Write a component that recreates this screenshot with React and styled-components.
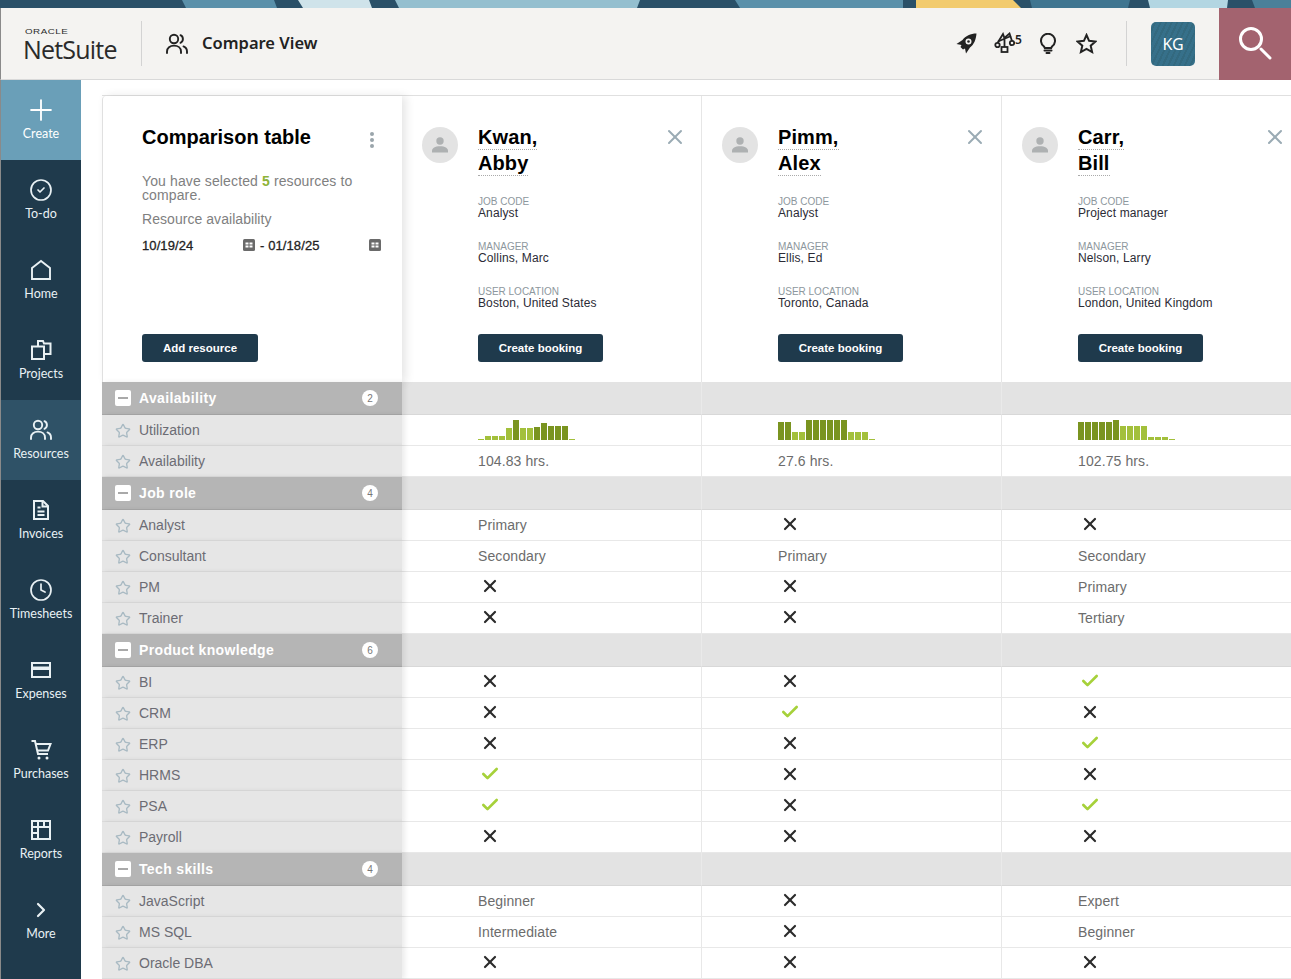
import styled, { createGlobalStyle } from 'styled-components';
import { Plus, CircleCheck, Clock, ChevronRight, X, Check, Star } from 'lucide-react';

const Global = createGlobalStyle`
  html, body { margin: 0; padding: 0; height: 100%; overflow: hidden; }
  body { font-family: "Liberation Sans", Arial, sans-serif; background: #fff; }
  * { box-sizing: border-box; }
`;

const NAV = [
  { label: 'Create', icon: <Plus size={34} strokeWidth={1.3} />, tone: 'create' },
  { label: 'To-do', icon: <CircleCheck size={24} strokeWidth={1.7} /> },
  { label: 'Home', icon: <HomeIcon /> },
  { label: 'Projects', icon: <ProjectsIcon /> },
  { label: 'Resources', icon: <PeopleIcon size={24} />, tone: 'active' },
  { label: 'Invoices', icon: <InvoiceIcon /> },
  { label: 'Timesheets', icon: <Clock size={24} strokeWidth={1.7} /> },
  { label: 'Expenses', icon: <CardIcon /> },
  { label: 'Purchases', icon: <CartIcon /> },
  { label: 'Reports', icon: <ReportIcon /> },
  { label: 'More', icon: <ChevronRight size={24} strokeWidth={2.2} /> },
];

const PEOPLE = [
  {
    last: 'Kwan,', first: 'Abby', job: 'Analyst', manager: 'Collins, Marc', location: 'Boston, United States',
    darkAt: 13,
    bars: [1, 4, 4, 4, 12, 20, 12, 12, 13, 17, 14, 14, 14, 1],
  },
  {
    last: 'Pimm,', first: 'Alex', job: 'Analyst', manager: 'Ellis, Ed', location: 'Toronto, Canada',
    darkAt: 13,
    bars: [18, 18, 8, 8, 20, 20, 20, 20, 20, 20, 8, 8, 8, 1],
  },
  {
    last: 'Carr,', first: 'Bill', job: 'Project manager', manager: 'Nelson, Larry', location: 'London, United Kingdom',
    darkAt: 18,
    bars: [18, 18, 18, 18, 18, 20, 14, 14, 14, 14, 3, 3, 3, 1],
  },
];

const SECTIONS = [
  {
    title: 'Availability', count: 2,
    rows: [
      { label: 'Utilization', cells: ['chart', 'chart', 'chart'] },
      { label: 'Availability', cells: ['104.83 hrs.', '27.6 hrs.', '102.75 hrs.'] },
    ],
  },
  {
    title: 'Job role', count: 4,
    rows: [
      { label: 'Analyst', cells: ['Primary', 'x', 'x'] },
      { label: 'Consultant', cells: ['Secondary', 'Primary', 'Secondary'] },
      { label: 'PM', cells: ['x', 'x', 'Primary'] },
      { label: 'Trainer', cells: ['x', 'x', 'Tertiary'] },
    ],
  },
  {
    title: 'Product knowledge', count: 6,
    rows: [
      { label: 'BI', cells: ['x', 'x', 'y'] },
      { label: 'CRM', cells: ['x', 'y', 'x'] },
      { label: 'ERP', cells: ['x', 'x', 'y'] },
      { label: 'HRMS', cells: ['y', 'x', 'x'] },
      { label: 'PSA', cells: ['y', 'x', 'y'] },
      { label: 'Payroll', cells: ['x', 'x', 'x'] },
    ],
  },
  {
    title: 'Tech skills', count: 4,
    rows: [
      { label: 'JavaScript', cells: ['Beginner', 'x', 'Expert'] },
      { label: 'MS SQL', cells: ['Intermediate', 'x', 'Beginner'] },
      { label: 'Oracle DBA', cells: ['x', 'x', 'x'] },
    ],
  },
];

function HomeIcon() {
  return (
    <svg width="22" height="22" viewBox="0 0 22 22" fill="none" stroke="currentColor" strokeWidth="1.9">
      <path d="M2 9 11 2l9 7v11H2z" />
    </svg>
  );
}

function ProjectsIcon() {
  return (
    <svg width="22" height="22" viewBox="0 0 22 22" fill="none" stroke="currentColor" strokeWidth="2">
      <path d="M2 7.5h12V20H2z" />
      <path d="M8 7.5V2h5l1 2.5h6.5V15H14" />
    </svg>
  );
}

function PeopleIcon({ size = 24 }) {
  return (
    <svg width={size} height={size} viewBox="0 0 24 24" fill="none" stroke="currentColor" strokeWidth="1.9" strokeLinecap="round">
      <circle cx="9" cy="7" r="4.2" />
      <path d="M2 21v-1.5C2 16 5 13.6 9 13.6s7 2.4 7 5.9V21" />
      <path d="M15.5 3.2a4.2 4.2 0 0 1 0 7.6M18.5 14.4c2.2.9 3.5 2.8 3.5 5V21" />
    </svg>
  );
}

function InvoiceIcon() {
  return (
    <svg width="22" height="22" viewBox="0 0 22 22" fill="none" stroke="currentColor" strokeWidth="2">
      <path d="M4 2h9l5 5v13H4z" />
      <path d="M12.5 2v5.5H18M7.5 12.5h7M7.500 16h7M7.5 8.5h3" />
    </svg>
  );
}

function CardIcon() {
  return (
    <svg width="22" height="22" viewBox="0 0 22 22">
      <path fill="currentColor" fillRule="evenodd" d="M1 3h20v16H1zm2 2v2.5h16V5zm0 6v6h16v-6z" />
    </svg>
  );
}

function CartIcon() {
  return (
    <svg width="22" height="22" viewBox="0 0 22 22" fill="none" stroke="currentColor" strokeWidth="2">
      <path d="M1.5 2H5l3 13h10" />
      <path d="M6 5h14.5l-2.5 6.5H7.5" />
      <circle cx="9" cy="19" r="1.5" fill="currentColor" stroke="none" />
      <circle cx="17" cy="19" r="1.5" fill="currentColor" stroke="none" />
    </svg>
  );
}

function ReportIcon() {
  return (
    <svg width="22" height="22" viewBox="0 0 22 22" fill="none" stroke="currentColor" strokeWidth="2">
      <path d="M2 2h18v18H2zM2 8h18M8 2v18M14 2v6M2 14h6" />
    </svg>
  );
}

function RocketIcon() {
  return (
    <svg width="21" height="21" viewBox="0 0 21 21">
      <path fill="#222" fillRule="evenodd" d="M20.5.5C14.5.5 9.500 3 6.500 7L.5 11l5 1-1 2 2.500 2.500 2-1 1 5 4-6c4-3 6-8 6.500-14zM12.500 5.500a3 3 0 1 0 0 6 3 3 0 0 0 0-6z" />
      <circle cx="12.5" cy="8.5" r="1.3" fill="#222" />
    </svg>
  );
}

function ScaleIcon() {
  return (
    <svg width="21" height="21" viewBox="0 0 21 21" fill="none" stroke="#222" strokeWidth="1.8">
      <circle cx="3.5" cy="13" r="2.2" />
      <circle cx="18" cy="11" r="2.2" />
      <path d="M3.5 11 9 2l1.5 4 5-4.500L18 9" />
      <path d="M4 9.500 17 4M10.500 5v10" />
      <rect x="7.5" y="15" width="6" height="5" />
    </svg>
  );
}

function BulbIcon() {
  return (
    <svg width="16" height="21" viewBox="0 0 16 21" fill="none" stroke="#222" strokeWidth="2" strokeLinecap="round">
      <path d="M4 13.5a7 7 0 1 1 8 0l-.8 1.5H4.8z" />
      <path d="M4.5 17.5h7M6.500 20h3" />
    </svg>
  );
}

function OutlineStar() {
  return (
    <svg width="21" height="21" viewBox="0 0 21 21" fill="none" stroke="#222" strokeWidth="2">
      <path d="M10.5 2l2.600 5.800 6.400.7-4.800 4.200 1.400 6.300-5.600-3.200-5.600 3.200 1.400-6.300L1.500 8.500l6.400-.7z" />
    </svg>
  );
}

function SearchIcon() {
  return (
    <svg width="40" height="40" viewBox="0 0 40 40" fill="none" stroke="#fff">
      <circle cx="16" cy="15" r="10.5" strokeWidth="3" />
      <path d="M26 25l9 9" strokeWidth="3" strokeLinecap="round" />
    </svg>
  );
}

function DateIcon() {
  return (
    <svg width="12" height="12" viewBox="0 0 12 12">
      <rect width="12" height="12" rx="1.5" fill="#6a6a6a" />
      <path fill="#fff" d="M2.500 3.500h3v2h-3zm4 0h3v2h-3zm-4 3h3v2h-3zm4 0h3v2h-3z" />
    </svg>
  );
}

function PersonIcon() {
  return (
    <svg width="18" height="18" viewBox="0 0 18 18" fill="#aeb1b2">
      <circle cx="9" cy="5" r="3.7" />
      <path d="M1 16.5v-1.8C1 12 4 10.200 9 10.200s8 1.800 8 4.500v1.800z" />
    </svg>
  );
}

function Bars({ person }) {
  return (
    <BarRow>
      {person.bars.map((h, i) => (
        <Bar key={i} $dark={h >= person.darkAt} style={{ height: h }} />
      ))}
    </BarRow>
  );
}

function Cell({ value }) {
  if (value === 'x') return <Mark><X size={20} strokeWidth={2.6} color="#2b2b2b" /></Mark>;
  if (value === 'y') return <Mark><Check size={20} strokeWidth={3.2} color="#a6d13a" /></Mark>;
  return <CellText>{value}</CellText>;
}

function PersonCard({ person }) {
  return (
    <Card>
      <Avatar><PersonIcon /></Avatar>
      <CardBody>
        <Name>
          <NameLine>{person.last}</NameLine>
          <NameLine>{person.first}</NameLine>
        </Name>
        <Field $first>
          <FieldLabel>JOB CODE</FieldLabel>
          <FieldValue>{person.job}</FieldValue>
        </Field>
        <Field>
          <FieldLabel>MANAGER</FieldLabel>
          <FieldValue>{person.manager}</FieldValue>
        </Field>
        <Field>
          <FieldLabel>USER LOCATION</FieldLabel>
          <FieldValue>{person.location}</FieldValue>
        </Field>
        <PrimaryButton $wide>Create booking</PrimaryButton>
      </CardBody>
      <Close><X size={24} strokeWidth={2} /></Close>
    </Card>
  );
}

export default function App() {
  return (
    <Page>
      <Global />
      <Banner>
        <svg width="1291" height="8" viewBox="0 0 1291 8">
          <rect width="1291" height="8" fill="#2a5068" />
          <path d="M182 0h92l3 8h-91z" fill="#5a90aa" />
          <path d="M298 0h71l3 8h-69z" fill="#cfe3ea" />
          <path d="M395 0h245l-3 8H399z" fill="#94bfcf" />
          <path d="M735 0h168v8H740z" fill="#5a90aa" />
          <path d="M916 0h97l8 8h-105z" fill="#f2cb6e" />
          <path d="M1030 0h100l-2 8h-96z" fill="#3f7590" />
          <path d="M1148 0h80l-1 8h-77z" fill="#b3d6e2" />
          <path d="M1252 0h39v8h-36z" fill="#4a8099" />
        </svg>
      </Banner>
      <Header>
        <LogoWrap>
          <LogoOracle>ORACLE</LogoOracle>
          <LogoName>NetSuite</LogoName>
        </LogoWrap>
        <HeaderDivider />
        <HeaderTitle>
          <PeopleIcon size={24} />
          <span>Compare View</span>
        </HeaderTitle>
        <HeaderIcons>
          <RocketIcon />
          <ScaleWrap><ScaleIcon /><ScaleCount>5</ScaleCount></ScaleWrap>
          <BulbIcon />
          <StarSlot><OutlineStar /></StarSlot>
        </HeaderIcons>
        <HeaderDivider $right />
        <UserTile>KG</UserTile>
        <SearchTile><SearchIcon /></SearchTile>
      </Header>
      <Body>
        <Sidebar>
          {NAV.map((n) => (
            <NavItem key={n.label} $tone={n.tone}>
              <NavIcon>{n.icon}</NavIcon>
              <span>{n.label}</span>
            </NavItem>
          ))}
        </Sidebar>
        <Main>
          <Table>
            <TopRow>
              <LeftHead>
                <TitleRow>
                  <PanelTitle>Comparison table</PanelTitle>
                  <Kebab><i /><i /><i /></Kebab>
                </TitleRow>
                <Selected>You have selected <b>5</b> resources to compare.</Selected>
                <SubLabel>Resource availability</SubLabel>
                <DateRow>
                  <DateText>10/19/24</DateText>
                  <DateIcon />
                  <DateText $sep>- 01/18/25</DateText>
                  <DateIcon />
                </DateRow>
                <PrimaryButton>Add resource</PrimaryButton>
              </LeftHead>
              {PEOPLE.map((p) => <PersonCard key={p.last} person={p} />)}
            </TopRow>
            {SECTIONS.map((s) => (
              <section key={s.title}>
                <GroupRow>
                  <GroupLabel>
                    <Toggle><i /></Toggle>
                    <GroupTitle>{s.title}</GroupTitle>
                    <Count>{s.count}</Count>
                  </GroupLabel>
                  <GroupCell /><GroupCell /><GroupCell />
                </GroupRow>
                {s.rows.map((r) => (
                  <Row key={r.label}>
                    <RowLabel>
                      <RowStar><Star size={16} strokeWidth={2} color="#a9bac3" /></RowStar>
                      <span>{r.label}</span>
                    </RowLabel>
                    {r.cells.map((c, i) => (
                      <RowCell key={i}>
                        {c === 'chart' ? <Bars person={PEOPLE[i]} /> : <Cell value={c} />}
                      </RowCell>
                    ))}
                  </Row>
                ))}
              </section>
            ))}
          </Table>
        </Main>
      </Body>
    </Page>
  );
}

const Page = styled.div`
  width: 1291px;
  height: 979px;
  overflow: hidden;
  display: flex;
  flex-direction: column;
`;

const Banner = styled.div`
  height: 8px;
  line-height: 0;
  flex: none;
`;

const Header = styled.header`
  height: 72px;
  flex: none;
  display: flex;
  align-items: center;
  background: #f4f3f1;
  border-bottom: 1px solid #d9d9d9;
  border-left: 1px solid #8a8a8a;
  padding-left: 23px;
`;

const LogoWrap = styled.div`
  width: 94px;
  color: #2a2a2a;
  font-family: "Open Sans", sans-serif;
  margin-top: 3px;
`;

const LogoOracle = styled.div`
  font-family: "Liberation Sans", sans-serif;
  font-size: 7.5px;
  line-height: 8px;
  letter-spacing: 0.4px;
  margin-left: 1px;
  transform: scaleX(1.3);
  transform-origin: left;
`;

const LogoName = styled.div`
  font-size: 25px;
  line-height: 26px;
  letter-spacing: -0.8px;
  margin-left: -1px;
`;

const HeaderDivider = styled.div`
  width: 1px;
  height: 45px;
  background: #d3d3d3;
  margin-left: ${({ $right }) => ($right ? '29px' : '23px')};
`;

const HeaderTitle = styled.div`
  display: flex;
  align-items: center;
  gap: 13px;
  margin: -2px 0 0 23px;
  color: #222;
  font-family: "Noto Sans", sans-serif;
  font-weight: 600;
  font-size: 16.5px;
  flex: 1;
  svg { margin-top: 2px; }
`;

const HeaderIcons = styled.div`
  display: flex;
  align-items: center;
  gap: 17px;
`;

const ScaleWrap = styled.div`
  display: flex;
  align-items: flex-start;
  width: 30px;
  height: 24px;
  margin-right: -1px;
`;

const ScaleCount = styled.span`
  color: #222;
  font-family: "Noto Sans", sans-serif;
  font-weight: 600;
  font-size: 12px;
  line-height: 10px;
  margin-top: 3px;
`;

const StarSlot = styled.span`
  display: flex;
  margin-left: 3px;
`;

const UserTile = styled.div`
  width: 44px;
  height: 44px;
  margin-left: 24px;
  border-radius: 5px;
  background: repeating-linear-gradient(115deg, #36708a 0 3px, #33697f 3px 5px);
  color: #fff;
  display: flex;
  align-items: center;
  justify-content: center;
  font-family: "Noto Sans", sans-serif;
  font-size: 16px;
`;

const SearchTile = styled.div`
  width: 72px;
  height: 72px;
  margin-left: 24px;
  background: #a3636f;
  display: flex;
  align-items: center;
  justify-content: center;
`;

const Body = styled.div`
  flex: 1;
  display: flex;
  min-height: 0;
`;

const Sidebar = styled.nav`
  width: 81px;
  flex: none;
  background: #1f3a4c;
  border-left: 1px solid #8a8a8a;
`;

const NavItem = styled.div`
  height: 80px;
  padding-top: 18px;
  display: flex;
  flex-direction: column;
  align-items: center;
  gap: 5px;
  color: ${({ $tone }) => ($tone === 'create' ? '#fff' : '#e9f1f4')};
  background: ${({ $tone }) => ($tone === 'create' ? '#6a9fb8' : $tone === 'active' ? '#2f5267' : 'transparent')};
  font-family: Lato, sans-serif;
  font-size: 12.5px;
  line-height: 14px;
`;

const NavIcon = styled.div`
  height: 24px;
  display: flex;
  align-items: center;
  justify-content: center;
  svg { display: block; flex: none; }
`;

const Main = styled.main`
  flex: 1;
  padding: 15px 0 0 21px;
  min-width: 0;
`;

const Table = styled.div`
  border-top: 1px solid #e0e0e0;
`;

const TopRow = styled.div`
  display: grid;
  grid-template-columns: repeat(4, 300px);
  height: 286px;
`;

const LeftHead = styled.div`
  position: relative;
  z-index: 1;
  background: #fff;
  border-left: 1px solid #e0e0e0;
  border-radius: 4px 0 0 0;
  box-shadow: 4px 0 10px rgba(0, 0, 0, 0.1);
  padding: 29px 20px 0 39px;
`;

const TitleRow = styled.div`
  display: flex;
  justify-content: space-between;
  align-items: center;
`;

const PanelTitle = styled.h2`
  margin: 0;
  font-size: 20px;
  line-height: 24px;
  font-weight: 700;
  color: #000;
`;

const Kebab = styled.div`
  display: flex;
  flex-direction: column;
  gap: 2px;
  padding: 6px 8px 0 0;
  i { width: 4px; height: 4px; border-radius: 50%; background: #9aa5ab; display: block; }
`;

const Selected = styled.p`
  margin: 25px 0 0;
  font-size: 14px;
  line-height: 14px;
  letter-spacing: 0.12px;
  color: #80807f;
  b { color: #8fb339; }
`;

const SubLabel = styled.div`
  margin-top: 9px;
  font-size: 14px;
  line-height: 16px;
  letter-spacing: 0.05px;
  color: #80807f;
`;

const DateRow = styled.div`
  display: flex;
  align-items: center;
  margin-top: 10px;
  height: 16px;
`;

const DateText = styled.span`
  font-size: 13px;
  letter-spacing: 0.1px;
  -webkit-text-stroke: 0.3px #222;
  color: #222;
  width: ${({ $sep }) => ($sep ? '114px' : '101px')};
  padding-left: ${({ $sep }) => ($sep ? '5px' : '0')};
`;

const PrimaryButton = styled.button`
  display: block;
  height: 28px;
  width: ${({ $wide }) => ($wide ? '125px' : '116px')};
  border: 0;
  border-radius: 3px;
  background: #1f3a4c;
  color: #fff;
  font-family: "Liberation Sans", sans-serif;
  font-size: 11.5px;
  font-weight: 700;
  margin-top: ${({ $wide }) => ($wide ? '25px' : '81px')};
  padding: 0;
`;

const Card = styled.div`
  position: relative;
  display: flex;
  background: #fff;
  border-right: 1px solid #e6e6e6;
  padding: 31px 0 0 20px;
`;

const Avatar = styled.div`
  width: 36px;
  height: 36px;
  border-radius: 50%;
  background: #e3e3e3;
  flex: none;
  display: flex;
  align-items: center;
  justify-content: center;
`;

const CardBody = styled.div`
  margin-left: 20px;
  margin-top: -1px;
`;

const Name = styled.div`
  display: flex;
  flex-direction: column;
  align-items: flex-start;
  gap: 2px;
`;

const NameLine = styled.span`
  font-size: 20px;
  line-height: 23px;
  font-weight: 700;
  color: #000;
  border-bottom: 1px dotted #aaa;
  letter-spacing: 0.1px;
`;

const Field = styled.div`
  margin-top: ${({ $first }) => ($first ? '20px' : '22px')};
`;

const FieldLabel = styled.div`
  font-size: 10px;
  line-height: 11px;
  color: #8d979d;
`;

const FieldValue = styled.div`
  font-size: 12px;
  line-height: 12px;
  letter-spacing: 0.12px;
  color: #2b2b35;
`;

const Close = styled.div`
  position: absolute;
  top: 29px;
  right: 14px;
  color: #9aabb4;
  line-height: 0;
`;

const GroupRow = styled.div`
  display: grid;
  grid-template-columns: repeat(4, 300px);
  height: 33px;
`;

const GroupLabel = styled.div`
  position: relative;
  z-index: 1;
  display: flex;
  align-items: center;
  background: #b5b5b5;
  box-shadow: 3px 0 5px rgba(0, 0, 0, 0.08);
  padding-left: 13px;
  border-bottom: 1px solid #a8a8a8;
`;

const Toggle = styled.div`
  width: 16px;
  height: 16px;
  border-radius: 2px;
  background: #fff;
  display: flex;
  align-items: center;
  justify-content: center;
  i { width: 10px; height: 2px; background: #a9a9a9; display: block; }
`;

const GroupTitle = styled.span`
  margin-left: 8px;
  flex: 1;
  font-size: 14px;
  font-weight: 700;
  letter-spacing: 0.35px;
  color: #fff;
`;

const Count = styled.span`
  width: 16px;
  height: 16px;
  margin-right: 24px;
  border-radius: 50%;
  background: #fff;
  color: #777;
  font-size: 10px;
  display: flex;
  align-items: center;
  justify-content: center;
`;

const GroupCell = styled.div`
  background: #e3e3e3;
  border-bottom: 1px solid #d8d8d8;
  border-right: 1px solid #eaeaea;
`;

const Row = styled.div`
  display: grid;
  grid-template-columns: repeat(4, 300px);
  height: 31px;
`;

const RowLabel = styled.div`
  position: relative;
  z-index: 1;
  display: flex;
  align-items: center;
  gap: 8px;
  padding-left: 13px;
  background: #e6e6e6;
  border-bottom: 1px solid #dcdcdc;
  box-shadow: 3px 0 5px rgba(0, 0, 0, 0.08);
  font-size: 14px;
  color: #6c6c74;
`;

const RowStar = styled.span`
  display: flex;
  margin-top: 2px;
`;

const RowCell = styled.div`
  display: flex;
  align-items: center;
  padding-left: 76px;
  background: #fff;
  border-bottom: 1px solid #e8e8e8;
  border-right: 1px solid #e8e8e8;
`;

const CellText = styled.span`
  font-size: 14px;
  letter-spacing: 0.1px;
  color: #6c6c6c;
`;

const Mark = styled.span`
  display: flex;
  margin: -2px 0 0 2px;
`;

const BarRow = styled.div`
  display: flex;
  align-items: flex-end;
  gap: 1px;
  height: 20px;
`;

const Bar = styled.div`
  width: 6px;
  background: ${({ $dark }) => ($dark ? '#7a9420' : '#a3c03b')};
`;
